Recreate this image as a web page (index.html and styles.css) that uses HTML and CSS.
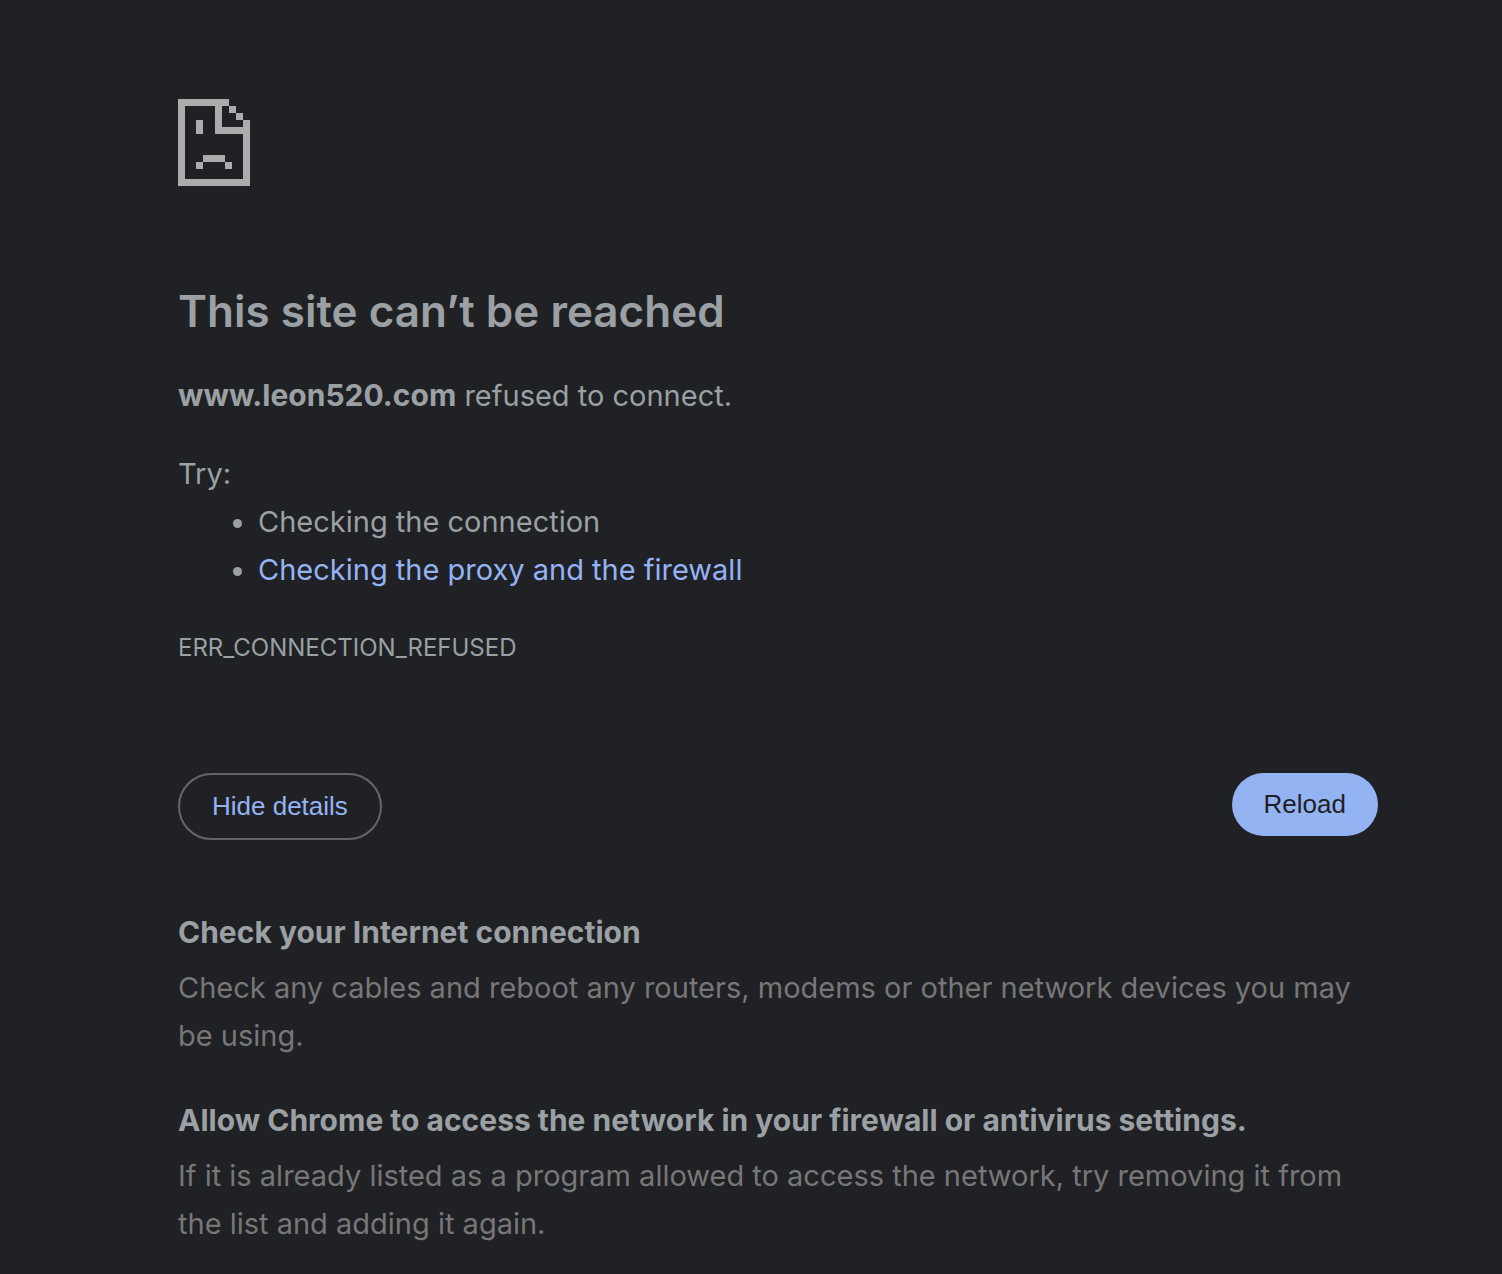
FILE: index.html
```html
<!DOCTYPE html>
<html lang="en">
<head>
<meta charset="utf-8">
<meta name="viewport" content="width=device-width, initial-scale=1">
<title>www.leon520.com</title>
<link rel="stylesheet" href="styles.css">
</head>
<body>
<main class="page">
  <svg class="error-icon" viewBox="0 0 72 87" aria-hidden="true" shape-rendering="crispEdges">
    <path fill-rule="evenodd" d="M0 0H51V7H58V14H65V21H72V87H0ZM7 7V80H65V35H37V7ZM44 7V28H65V21H58V14H51V7ZM18 21H25V35H18ZM25 56H47V63H54V70H47V63H25V70H18V63H25Z"/>
  </svg>
  <h1 class="title">This site can’t be reached</h1>
  <p class="summary"><strong>www.leon520.com</strong> refused to connect.</p>
  <div class="suggestions">
    <p>Try:</p>
    <ul class="suggestion-list">
      <li>Checking the connection</li>
      <li><a class="link" href="#firewall">Checking the proxy and the firewall</a></li>
    </ul>
  </div>
  <p class="error-code">ERR_CONNECTION_REFUSED</p>
  <div class="actions">
    <button class="button button-secondary" type="button">Hide details</button>
    <button class="button button-primary" type="button">Reload</button>
  </div>
  <section class="detail">
    <h2 class="detail-title">Check your Internet connection</h2>
    <p class="detail-text">Check any cables and reboot any routers, modems or other network devices you may be using.</p>
  </section>
  <section class="detail" id="firewall">
    <h2 class="detail-title">Allow Chrome to access the network in your firewall or antivirus settings.</h2>
    <p class="detail-text">If it is already listed as a program allowed to access the network, try removing it from the list and adding it again.</p>
  </section>
</main>
</body>
</html>
```

FILE: styles.css
```css
* { box-sizing: border-box; }
body {
  margin: 0;
  background: #202124;
  color: #9aa0a3;
  font: 29px/48px Inter, sans-serif;
}
h1, h2, p, ul { margin: 0; }
.page {
  max-width: 1200px;
  margin-left: 178px;
  margin-right: 124px;
  padding-top: 99px;
}
.error-icon { display: block; width: 72px; height: 87px; fill: #acacac; }
.title { margin-top: 96px; font-size: 44px; line-height: 58px; font-weight: 600; }
.summary { margin-top: 31px; }
.summary strong { font-size: 30px; }
.suggestions { margin-top: 30px; }
.suggestion-list { padding-left: 80px; }
.link { color: #94b3f5; text-decoration: none; }
.error-code { margin-top: 30px; font-size: 24px; }
.actions {
  display: flex;
  justify-content: space-between;
  align-items: flex-start;
  margin-top: 101px;
}
.button {
  padding: 16px 32px;
  border: 0;
  border-radius: 40px;
  font: 26px/31px "Liberation Sans", sans-serif;
  cursor: pointer;
}
.button-secondary { border: 2px solid #646568; background: transparent; color: #94b3f5; }
.button-primary { background: #94b3f3; color: #202124; }
.detail { margin-top: 36px; }
.actions + .detail { margin-top: 68px; }
.detail-title { font-size: 30px; line-height: 48px; font-weight: 700; }
.detail-text { margin-top: 8px; color: #777; }
```
